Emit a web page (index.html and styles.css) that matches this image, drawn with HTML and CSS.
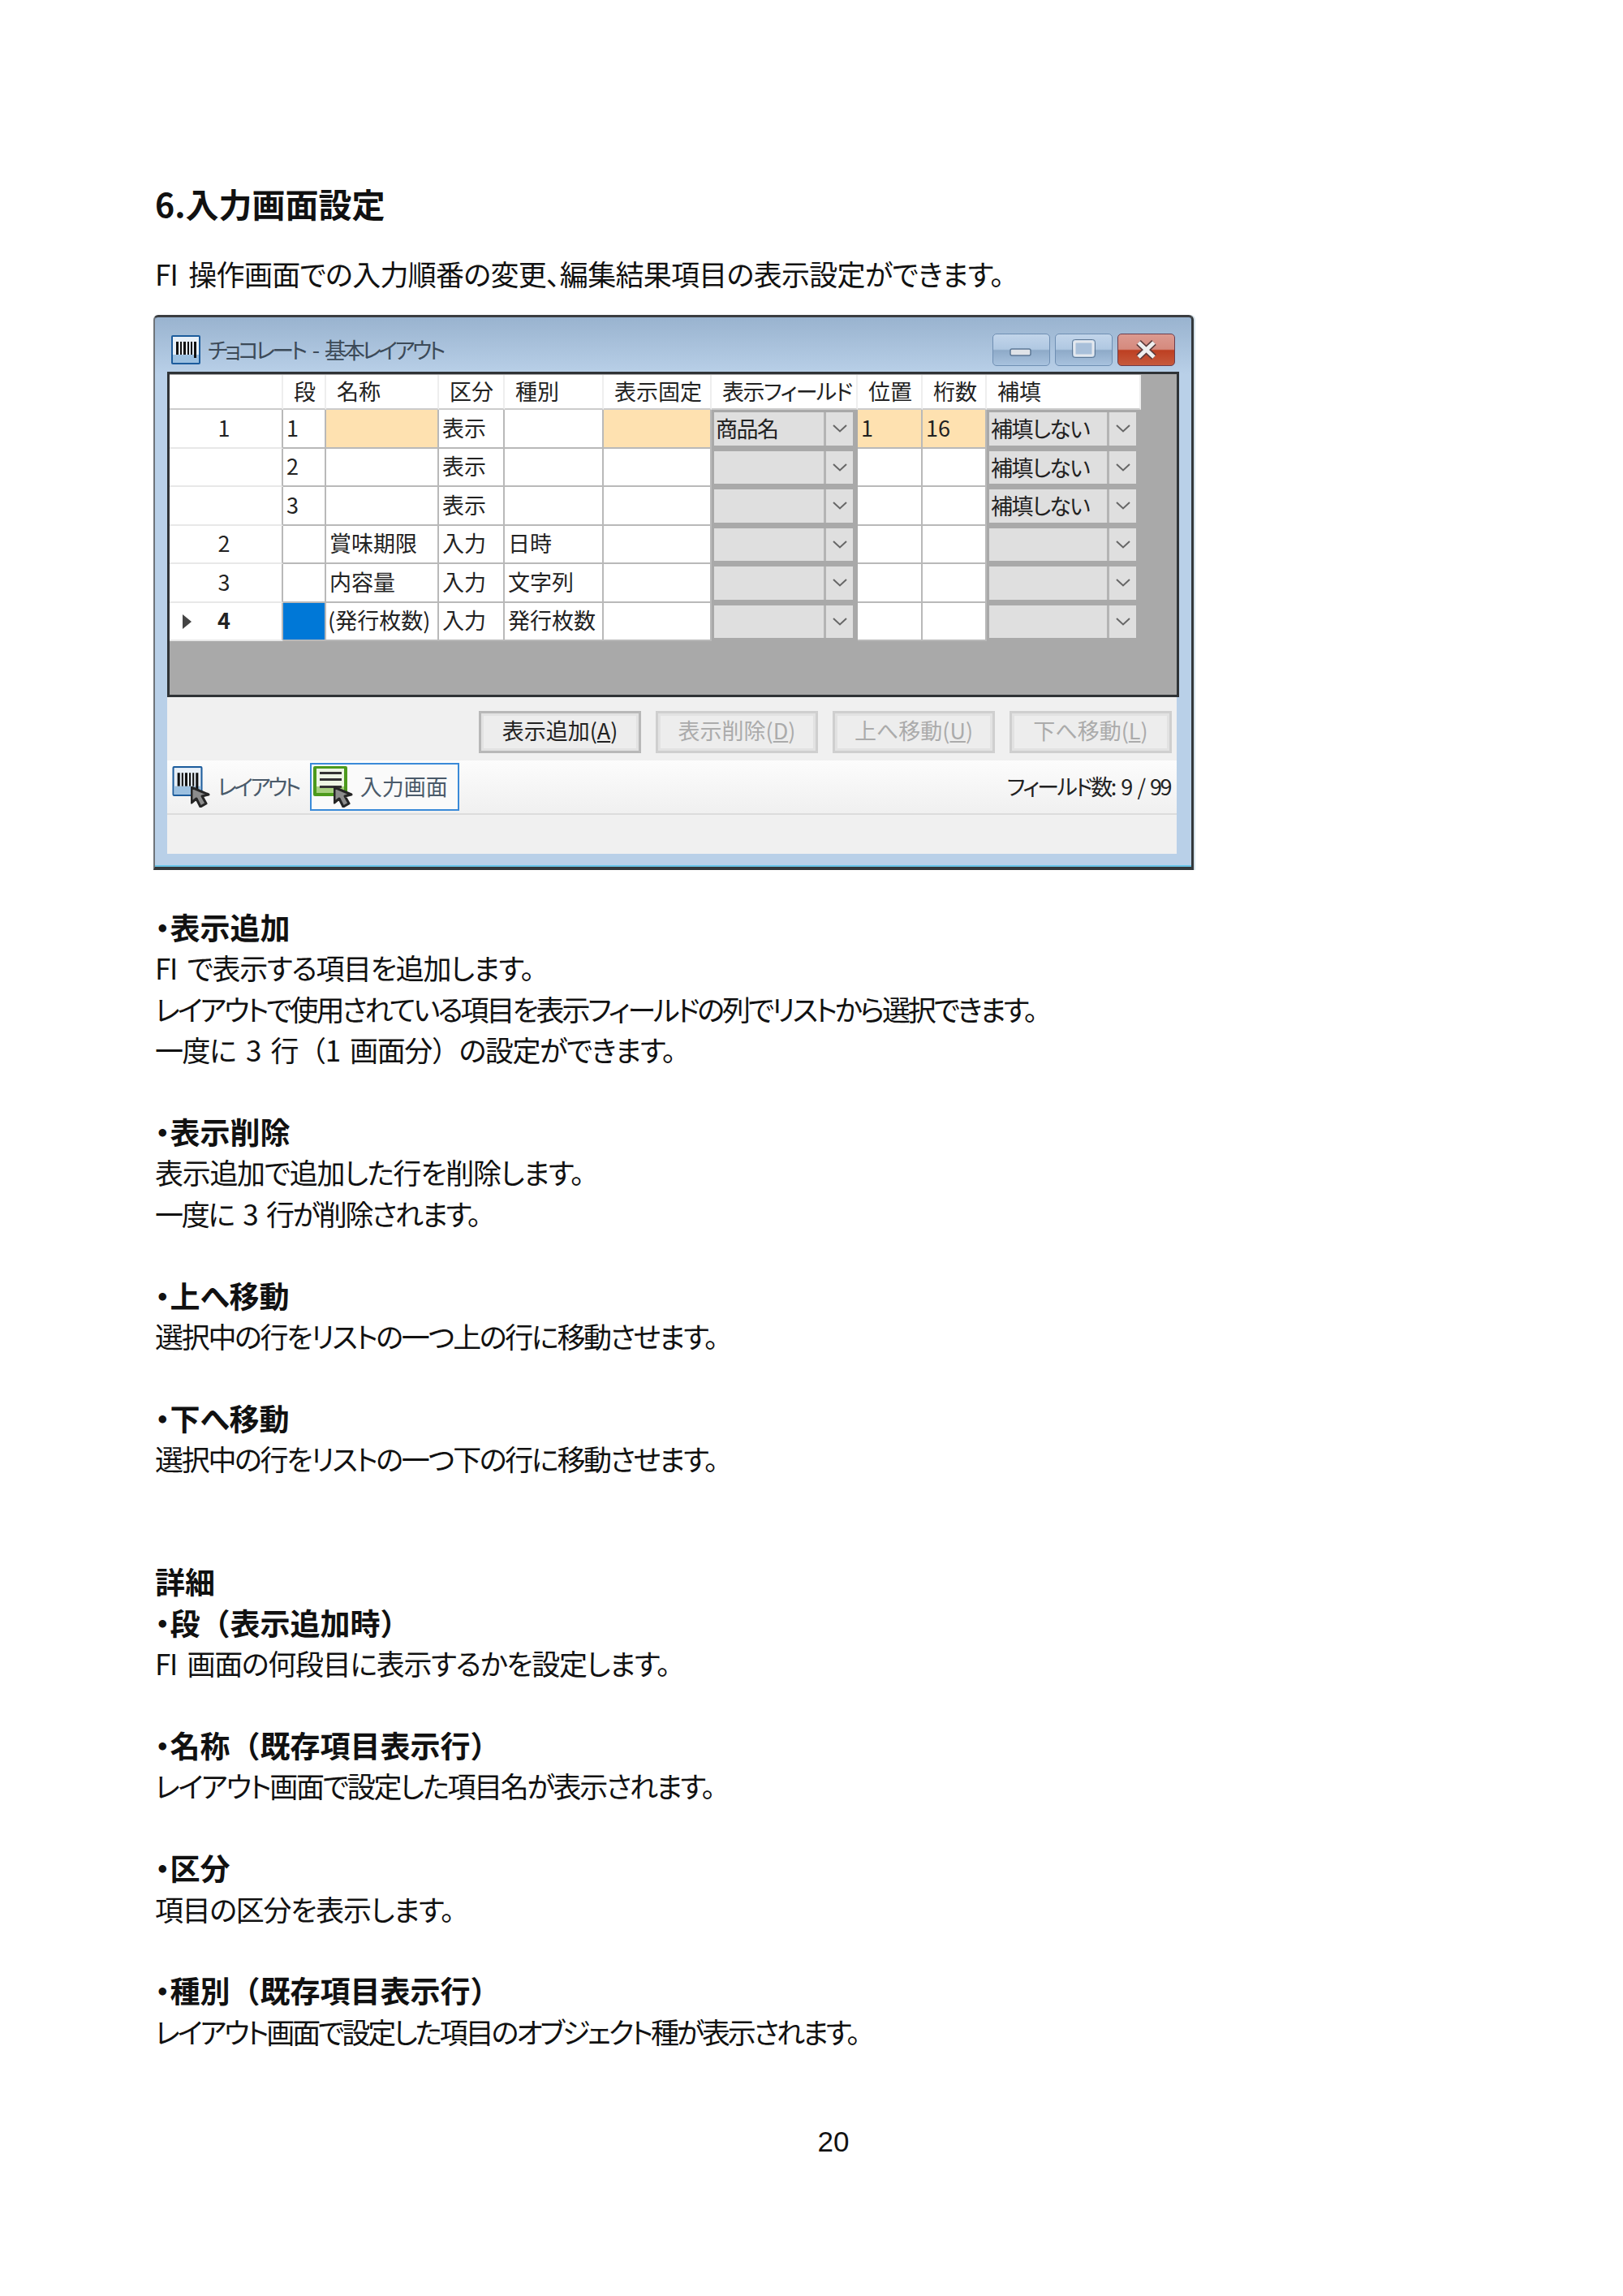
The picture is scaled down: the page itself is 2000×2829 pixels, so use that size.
FILE: index.html
```html
<!DOCTYPE html>
<html lang="ja">
<head>
    <meta charset="UTF-8">
    <title>6.入力画面設定</title>
    <link rel="stylesheet" href="styles.css">
</head>
<body>
    <svg class="sprites" xmlns="http://www.w3.org/2000/svg">
        <symbol id="chev" viewBox="0 0 18 10">
            <polyline points="1,1 9,8.5 17,1" fill="none" stroke="#666" stroke-width="2"/>
        </symbol>
        <symbol id="barcode" viewBox="0 0 36 36">
            <rect x="0" y="0" width="36" height="36" rx="2" fill="#1c5c9c"/>
            <rect x="2" y="2" width="32" height="32" fill="#e8f0f8"/>
            <rect x="2" y="24" width="32" height="10" fill="#9cc0e0"/>
            <rect x="6" y="8" width="3" height="16" fill="#111"/>
            <rect x="11" y="8" width="2" height="16" fill="#111"/>
            <rect x="15" y="8" width="3" height="16" fill="#111"/>
            <rect x="20" y="8" width="2" height="16" fill="#111"/>
            <rect x="24" y="8" width="2" height="16" fill="#111"/>
            <rect x="28" y="8" width="3" height="20" fill="#111"/>
        </symbol>
        <symbol id="cursor" viewBox="0 0 26 26">
            <polygon points="1,1 1,20 7,15 12,25 19,21 14,12 22,10" fill="#8c8c8c" stroke="#262626" stroke-width="3" stroke-linejoin="round"/>
        </symbol>
        <symbol id="form" viewBox="0 0 42 37">
            <rect x="0" y="0" width="42" height="37" rx="2" fill="#4c9a1c"/>
            <rect x="4" y="3" width="34" height="30" fill="#eef6e4"/>
            <rect x="4" y="25" width="34" height="8" fill="#a8d080"/>
            <rect x="8" y="7" width="27" height="3" fill="#333"/>
            <rect x="8" y="15" width="27" height="3" fill="#333"/>
            <rect x="8" y="24" width="27" height="3" fill="#333"/>
        </symbol>
    </svg>

    <div class="page">
        <h1 class="title">6.入力画面設定</h1>
        <p class="intro">FI 操作画面での入力順番の変更、編集結果項目の表示設定ができます。</p>

        <div class="window">
            <div class="titlebar">
                <svg class="app-icon"><use href="#barcode"/></svg>
                <span class="app-name">チョコレート - 基本レイアウト</span>
                <div class="win-buttons">
                    <div class="win-btn">
                        <svg width="71" height="40" viewBox="0 0 71 40"><rect x="22" y="19" width="25" height="8" rx="2" fill="#dfe3e8" stroke="#5d7896" stroke-width="1.5"/></svg>
                    </div>
                    <div class="win-btn">
                        <svg width="71" height="40" viewBox="0 0 71 40"><rect x="24" y="10" width="23" height="17" rx="2" fill="#a9c0da" stroke="#e4e8ee" stroke-width="3"/><rect x="21.500" y="7.500" width="28" height="22" rx="3" fill="none" stroke="#5d7896" stroke-width="1"/></svg>
                    </div>
                    <div class="win-btn close">
                        <svg width="71" height="40" viewBox="0 0 71 40"><path d="M26 11 L45 29 M45 11 L26 29" stroke="#5a3a3a" stroke-width="8"/><path d="M26 11 L45 29 M45 11 L26 29" stroke="#eee" stroke-width="5"/></svg>
                    </div>
                </div>
            </div>

            <div class="grid-wrap">
                <table class="grid">
                    <colgroup>
                        <col class="c-head"><col class="c-dan"><col class="c-name"><col class="c-kubun"><col class="c-type">
                        <col class="c-fix"><col class="c-field"><col class="c-pos"><col class="c-len"><col class="c-fill">
                    </colgroup>
                    <tr class="head-row">
                        <th></th><th>段</th><th>名称</th><th>区分</th><th>種別</th><th>表示固定</th><th class="field-head">表示フィールド</th><th>位置</th><th>桁数</th><th>補填</th>
                    </tr>
                    <tr>
                        <td class="row-head">1</td><td>1</td><td class="req"></td><td>表示</td><td></td><td class="req"></td>
                        <td class="combo-cell"><div class="combo"><span class="combo-text">商品名</span><span class="combo-btn"><svg class="chev"><use href="#chev"/></svg></span></div></td>
                        <td class="req">1</td><td class="req">16</td>
                        <td class="combo-cell"><div class="combo"><span class="combo-text">補填しない</span><span class="combo-btn"><svg class="chev"><use href="#chev"/></svg></span></div></td>
                    </tr>
                    <tr>
                        <td class="row-head"></td><td>2</td><td></td><td>表示</td><td></td><td></td>
                        <td class="combo-cell"><div class="combo"><span class="combo-text"></span><span class="combo-btn"><svg class="chev"><use href="#chev"/></svg></span></div></td>
                        <td></td><td></td>
                        <td class="combo-cell"><div class="combo"><span class="combo-text">補填しない</span><span class="combo-btn"><svg class="chev"><use href="#chev"/></svg></span></div></td>
                    </tr>
                    <tr>
                        <td class="row-head"></td><td>3</td><td></td><td>表示</td><td></td><td></td>
                        <td class="combo-cell"><div class="combo"><span class="combo-text"></span><span class="combo-btn"><svg class="chev"><use href="#chev"/></svg></span></div></td>
                        <td></td><td></td>
                        <td class="combo-cell"><div class="combo"><span class="combo-text">補填しない</span><span class="combo-btn"><svg class="chev"><use href="#chev"/></svg></span></div></td>
                    </tr>
                    <tr>
                        <td class="row-head">2</td><td></td><td>賞味期限</td><td>入力</td><td>日時</td><td></td>
                        <td class="combo-cell"><div class="combo"><span class="combo-text"></span><span class="combo-btn"><svg class="chev"><use href="#chev"/></svg></span></div></td>
                        <td></td><td></td>
                        <td class="combo-cell"><div class="combo"><span class="combo-text"></span><span class="combo-btn"><svg class="chev"><use href="#chev"/></svg></span></div></td>
                    </tr>
                    <tr>
                        <td class="row-head">3</td><td></td><td>内容量</td><td>入力</td><td>文字列</td><td></td>
                        <td class="combo-cell"><div class="combo"><span class="combo-text"></span><span class="combo-btn"><svg class="chev"><use href="#chev"/></svg></span></div></td>
                        <td></td><td></td>
                        <td class="combo-cell"><div class="combo"><span class="combo-text"></span><span class="combo-btn"><svg class="chev"><use href="#chev"/></svg></span></div></td>
                    </tr>
                    <tr class="last-row">
                        <td class="row-head current">4</td><td class="selected"></td><td class="long-name">(発行枚数)</td><td>入力</td><td>発行枚数</td><td></td>
                        <td class="combo-cell"><div class="combo"><span class="combo-text"></span><span class="combo-btn"><svg class="chev"><use href="#chev"/></svg></span></div></td>
                        <td></td><td></td>
                        <td class="combo-cell"><div class="combo"><span class="combo-text"></span><span class="combo-btn"><svg class="chev"><use href="#chev"/></svg></span></div></td>
                    </tr>
                </table>
            </div>

            <div class="panel">
                <div class="actions">
                    <div class="btn">表示追加(<u>A</u>)</div>
                    <div class="btn disabled">表示削除(<u>D</u>)</div>
                    <div class="btn disabled">上へ移動(<u>U</u>)</div>
                    <div class="btn disabled">下へ移動(<u>L</u>)</div>
                </div>
                <div class="strip">
                    <div class="tab">
                        <span class="tab-icon"><svg class="tab-base"><use href="#barcode"/></svg><svg class="tab-cursor"><use href="#cursor"/></svg></span>
                        <span class="tab-kana">レイアウト</span>
                    </div>
                    <div class="tab active">
                        <span class="tab-icon"><svg class="tab-base"><use href="#form"/></svg><svg class="tab-cursor"><use href="#cursor"/></svg></span>
                        入力画面
                    </div>
                    <div class="field-count">フィールド数: 9 / 99</div>
                </div>
                <div class="status"></div>
            </div>
        </div>

        <section class="block">
            <h2>・表示追加</h2>
            <p class="tight-1">FI で表示する項目を追加します。</p>
            <p class="tight-3">レイアウトで使用されている項目を表示フィールドの列でリストから選択できます。</p>
            <p class="tight-0">一度に 3 行<span class="full">（</span>1 画面分<span class="full">）</span>の設定ができます。</p>
        </section>
        <section class="block">
            <h2>・表示削除</h2>
            <p class="tight-1">表示追加で追加した行を削除します。</p>
            <p class="tight-2">一度に 3 行が削除されます。</p>
        </section>
        <section class="block">
            <h2>・上へ移動</h2>
            <p class="tight-2">選択中の行をリストの一つ上の行に移動させます。</p>
        </section>
        <section class="block">
            <h2>・下へ移動</h2>
            <p class="tight-2">選択中の行をリストの一つ下の行に移動させます。</p>
        </section>

        <section class="block details">
            <h2>詳細</h2>
            <h2>・段<span class="full">（</span>表示追加時<span class="full">）</span></h2>
            <p class="tight-1">FI 画面の何段目に表示するかを設定します。</p>
        </section>
        <section class="block">
            <h2>・名称<span class="full">（</span>既存項目表示行<span class="full">）</span></h2>
            <p class="tight-2">レイアウト画面で設定した項目名が表示されます。</p>
        </section>
        <section class="block">
            <h2>・区分</h2>
            <p class="tight-1">項目の区分を表示します。</p>
        </section>
        <section class="block">
            <h2>・種別<span class="full">（</span>既存項目表示行<span class="full">）</span></h2>
            <p class="tight-3">レイアウト画面で設定した項目のオブジェクト種が表示されます。</p>
        </section>

        <div class="page-no">20</div>
    </div>
</body>
</html>
```

FILE: styles.css
```css
* {
    margin: 0;
    padding: 0;
    box-sizing: border-box;
}

body {
    background: #fff;
    color: #111;
    font-family: "Noto Sans CJK JP", "Noto Sans", sans-serif;
    font-feature-settings: "palt";
}

.sprites {
    display: none;
}

.page {
    width: 2000px;
    height: 2829px;
    padding: 225px 137px 0 191px;
}

.title {
    font-size: 41px;
    line-height: 50px;
    font-weight: 700;
}

.intro {
    margin-top: 37px;
    font-size: 35px;
    line-height: 50px;
    letter-spacing: -0.7px;
    word-spacing: 6px;
}

/* screenshot of the app window */
.window {
    margin: 26px 0 45px -2px;
    width: 1282px;
    height: 684px;
    display: flex;
    flex-direction: column;
    border-top: 3px solid #3a3d40;
    border-left: 2px solid #6f7479;
    border-right: 3px solid #33383b;
    border-bottom: 4px solid #33383b;
    border-radius: 6px 6px 0 0;
    padding: 0 15px 0 15px;
    background: linear-gradient(#99b3cf 0, #b9d0e8 70px, #b9d0e8 100%);
    box-shadow: 0 -2px 0 #69c5e8 inset, 2px 0 0 #d5e2ea;
    font-size: 27px;
    color: #222;
}

.titlebar {
    height: 67px;
    display: flex;
    align-items: flex-end;
    padding: 0 5px 7px 5px;
}

.app-icon {
    width: 36px;
    height: 36px;
    margin-bottom: 2px;
}

.app-name {
    margin: 0 0 2px 9px;
    line-height: 36px;
    color: #3c4a58;
    letter-spacing: -3.7px;
    word-spacing: 7px;
}

.win-buttons {
    margin-left: auto;
    display: flex;
    gap: 6px;
}

.win-btn {
    width: 71px;
    height: 40px;
    border: 1px solid #6f8fb3;
    border-radius: 5px;
    background: linear-gradient(#c2d5ea 0, #b0c8e2 48%, #8eaac8 52%, #a8c2de 100%);
    overflow: hidden;
}

.win-btn svg {
    display: block;
    margin: -1px;
}

.win-btn.close {
    border-color: #6b3d4d;
    background: linear-gradient(#dc9a90 0, #d58a7e 48%, #bd3f22 52%, #c65a3c 100%);
}

.grid-wrap {
    height: 401px;
    flex: none;
    border: 3px solid #2f3336;
    background: #a9a9a9;
}

.grid {
    width: 1197px;
    table-layout: fixed;
    border-collapse: separate;
    border-spacing: 0;
    margin-top: 1px;
}

.c-head { width: 140px; }
.c-dan { width: 53px; }
.c-name { width: 139px; }
.c-kubun { width: 81px; }
.c-type { width: 122px; }
.c-fix { width: 133px; }
.c-field { width: 180px; }
.c-pos { width: 80px; }
.c-len { width: 79px; }
.c-fill { width: 190px; }

.grid th,
.grid td {
    height: 47.5px;
    background: #fff;
    border-right: 2px solid #b9b9b9;
    border-bottom: 2px solid #b9b9b9;
    text-align: left;
    font-weight: 400;
    line-height: 1;
    padding: 0 0 3px 4px;
    white-space: nowrap;
}

.grid .head-row th {
    height: 43px;
    padding: 0 0 2px 13px;
    border-right-color: #eee;
    border-bottom-color: #ccc;
}

.grid .head-row .field-head {
    letter-spacing: -1.5px;
}

.grid .long-name {
    padding-left: 2px;
}

.grid .row-head {
    text-align: center;
    padding: 0 4px 3px 0;
    border-right-color: #b9b9b9;
    border-bottom-color: #e8e8e8;
}

.grid .current {
    position: relative;
    font-weight: 700;
}

/* row pointer */
.grid .current::before {
    content: "";
    position: absolute;
    left: 16px;
    top: 14px;
    border-left: 11px solid #444;
    border-top: 9px solid transparent;
    border-bottom: 9px solid transparent;
}

.grid .req {
    background: #fee1b0;
}

.grid .selected {
    background: #0078d7;
}

.grid .combo-cell {
    background: #a9a9a9;
    padding: 3px 4px 2px 3px;
    border-color: #a9a9a9;
}

.combo {
    height: 100%;
    display: flex;
    align-items: stretch;
    background: #dfdfdf;
}

.combo-text {
    flex: 1;
    padding-left: 2px;
    line-height: 39px;
    letter-spacing: -1.5px;
}

.combo-btn {
    width: 36px;
    border-left: 3px solid #b4b4b4;
    display: flex;
    align-items: center;
    justify-content: center;
}

.chev {
    width: 18px;
    height: 10px;
}

.panel {
    width: 1244px;
    background: #f0f0f0;
}

.actions {
    padding: 17px 6px 9px 0;
    display: flex;
    justify-content: flex-end;
    gap: 18px;
}

.btn {
    width: 200px;
    height: 52px;
    border: 3px solid #b8b8b8;
    background: #ededed;
    box-shadow: inset 0 0 0 3px #e2e2e2;
    display: flex;
    align-items: center;
    justify-content: center;
    padding-bottom: 5px;
    color: #222;
    white-space: pre;
}

.btn.disabled {
    border-color: #cfcfcf;
    color: #ababab;
}

.strip {
    height: 67px;
    display: flex;
    align-items: center;
    border-bottom: 2px solid #dcdcdc;
    background: linear-gradient(#fcfcfc, #f0f0f0);
}

.tab {
    height: 59px;
    display: flex;
    align-items: center;
    padding: 0 12px 3px 2px;
    border: 2px solid transparent;
    color: #4a5a6a;
}

.tab.active {
    border-color: #3a8ad8;
    background: #fafafa;
}

.tab-kana {
    letter-spacing: -3.6px;
}

.tab-icon {
    position: relative;
    width: 58px;
    height: 50px;
    flex: none;
    align-self: flex-start;
    margin-top: 2px;
}

.tab-base {
    display: block;
    width: 42px;
    height: 37px;
}

.tab-cursor {
    position: absolute;
    left: 25px;
    top: 25px;
    width: 26px;
    height: 26px;
}

.field-count {
    margin-left: auto;
    padding: 0 8px 3px 0;
    letter-spacing: -2.5px;
    word-spacing: 4px;
}

.status {
    height: 48px;
}

/* document text */
.block {
    margin-bottom: 50.400px;
}

.block h2 {
    font-size: 37px;
    line-height: 50.400px;
    font-weight: 700;
}

.block p {
    font-size: 35px;
    line-height: 50.400px;
    word-spacing: 6px;
}

.full {
    font-feature-settings: normal;
}

.tight-0 { letter-spacing: -1.4px; }
.tight-1 { letter-spacing: -1.3px; }
.tight-2 { letter-spacing: -2.3px; }
.tight-3 { letter-spacing: -3.1px; }

.details {
    margin-top: 100.800px;
}

.page-no {
    margin-top: 86px;
    text-align: center;
    font-family: "Liberation Sans", sans-serif;
    font-size: 35px;
    line-height: 50px;
}
```
